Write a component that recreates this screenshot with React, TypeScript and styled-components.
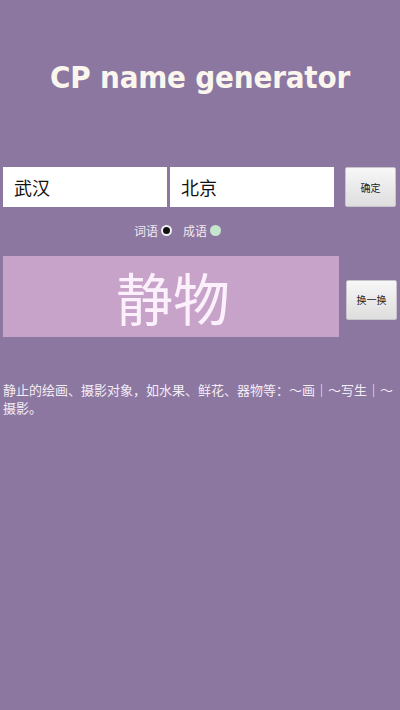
import styled, { createGlobalStyle } from "styled-components";

const CJK = `"Noto Sans CJK SC", "Liberation Sans", sans-serif`;

const GlobalStyle = createGlobalStyle`
  html, body {
    margin: 0;
    padding: 0;
    background: #8c77a1;
  }
`;

const Page = styled.main`
  width: 400px;
  min-height: 710px;
  background: #8c77a1;
  font-family: ${CJK};
  display: flex;
  flex-direction: column;
`;

const Title = styled.h1`
  margin: 59px 0 0;
  height: 44px;
  text-align: center;
  font-family: "DejaVu Sans Condensed", "DejaVu Sans", sans-serif;
  font-stretch: condensed;
  font-weight: bold;
  font-size: 31px;
  letter-spacing: -0.2px;
  color: #faf6ee;
`;

const InputRow = styled.div`
  display: flex;
  align-items: center;
  gap: 3px;
  padding: 0 3px;
  margin-top: 64px;
`;

const NameInput = styled.input`
  box-sizing: border-box;
  width: 164px;
  height: 40px;
  border: none;
  outline: none;
  padding: 0 0 0 11px;
  background: #ffffff;
  font-family: ${CJK};
  font-size: 18px;
  color: #111;
`;

const ActionButton = styled.button<{ $offset?: number }>`
  box-sizing: border-box;
  width: 51px;
  height: 40px;
  margin-left: ${({ $offset }) => $offset ?? 8}px;
  border: 1px solid #c8c4cc;
  border-radius: 2px;
  background: linear-gradient(#f7f7f7, #dedede);
  font-family: ${CJK};
  font-size: 10px;
  color: #222;
  padding: 0;
`;

const ModeRow = styled.div`
  display: flex;
  align-items: center;
  padding-left: 134px;
  margin-top: 15px;
  height: 16px;
  font-size: 12px;
  color: #f1eaf4;
`;

const ModeOption = styled.label`
  display: flex;
  align-items: center;
  gap: 3px;
  margin-right: 11px;
`;

const Dot = styled.span<{ $checked: boolean }>`
  box-sizing: border-box;
  width: 11px;
  height: 11px;
  border-radius: 50%;
  background: ${({ $checked }) => ($checked ? "#111" : "#c5e6cc")};
  border: ${({ $checked }) => ($checked ? "2.5px solid #f2f2f2" : "none")};
`;

const ResultRow = styled.div`
  display: flex;
  align-items: center;
  padding: 0 3px;
  margin-top: 18px;
`;

const ResultBox = styled.div`
  width: 336px;
  height: 81px;
  background: #c7a3c9;
  display: flex;
  align-items: center;
  justify-content: center;
  font-size: 57px;
  line-height: 1;
  color: #fbf0fb;
`;

const Word = styled.span`
  transform: translateX(2px);
`;

const Description = styled.p`
  margin: 44px 0 0;
  padding: 0 3px;
  font-size: 13px;
  line-height: 18px;
  color: #f3ecf5;
`;

const App = () => (
  <Page>
    <GlobalStyle />
    <Title>CP name generator</Title>

    <InputRow>
      <NameInput defaultValue="武汉" />
      <NameInput defaultValue="北京" />
      <ActionButton $offset={8}>确定</ActionButton>
    </InputRow>

    <ModeRow>
      <ModeOption>
        词语 <Dot $checked />
      </ModeOption>
      <ModeOption>
        成语 <Dot $checked={false} />
      </ModeOption>
    </ModeRow>

    <ResultRow>
      <ResultBox>
        <Word>静物</Word>
      </ResultBox>
      <ActionButton $offset={7} style={{ marginTop: 6 }}>
        换一换
      </ActionButton>
    </ResultRow>

    <Description>
      静止的绘画、摄影对象，如水果、鲜花、器物等：～画｜～写生｜～摄影。
    </Description>
  </Page>
);

export default App;
